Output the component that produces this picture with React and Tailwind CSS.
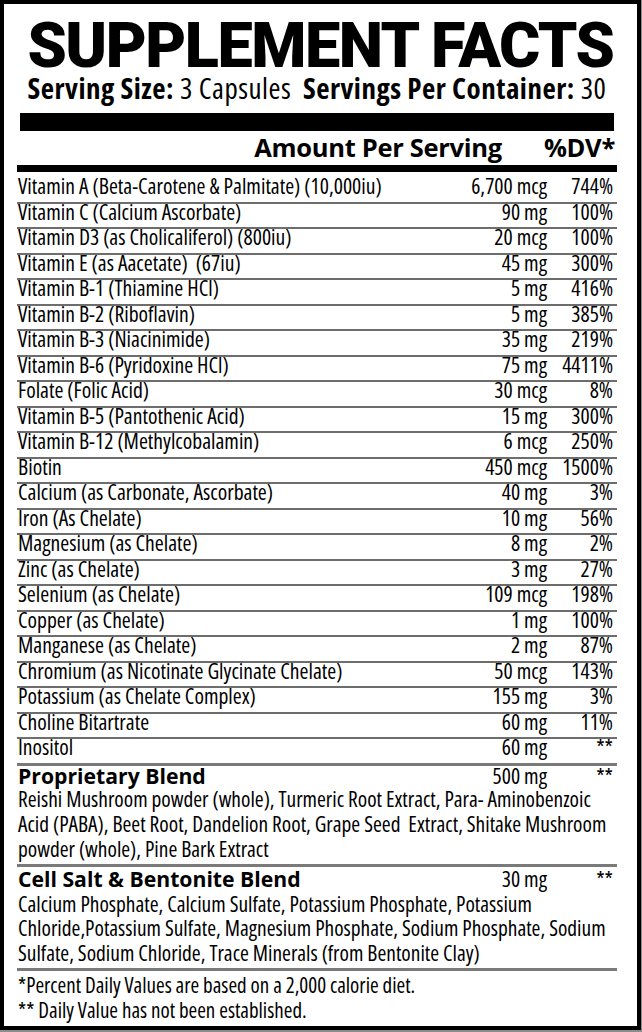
const rows = [
  ["Vitamin A (Beta-Carotene & Palmitate) (10,000iu)", "6,700 mcg", "744%"],
  ["Vitamin C (Calcium Ascorbate)", "90 mg", "100%"],
  ["Vitamin D3 (as Cholicaliferol) (800iu)", "20 mcg", "100%"],
  ["Vitamin E (as Aacetate)  (67iu)", "45 mg", "300%"],
  ["Vitamin B-1 (Thiamine HCl)", "5 mg", "416%"],
  ["Vitamin B-2 (Riboflavin)", "5 mg", "385%"],
  ["Vitamin B-3 (Niacinimide)", "35 mg", "219%"],
  ["Vitamin B-6 (Pyridoxine HCl)", "75 mg", "4411%"],
  ["Folate (Folic Acid)", "30 mcg", "8%"],
  ["Vitamin B-5 (Pantothenic Acid)", "15 mg", "300%"],
  ["Vitamin B-12 (Methylcobalamin)", "6 mcg", "250%"],
  ["Biotin", "450 mcg", "1500%"],
  ["Calcium (as Carbonate, Ascorbate)", "40 mg", "3%"],
  ["Iron (As Chelate)", "10 mg", "56%"],
  ["Magnesium (as Chelate)", "8 mg", "2%"],
  ["Zinc (as Chelate)", "3 mg", "27%"],
  ["Selenium (as Chelate)", "109 mcg", "198%"],
  ["Copper (as Chelate)", "1 mg", "100%"],
  ["Manganese (as Chelate)", "2 mg", "87%"],
  ["Chromium (as Nicotinate Glycinate Chelate)", "50 mcg", "143%"],
  ["Potassium (as Chelate Complex)", "155 mg", "3%"],
  ["Choline Bitartrate", "60 mg", "11%"],
];

const proprietary = [
  "Reishi Mushroom powder (whole), Turmeric Root Extract, Para- Aminobenzoic",
  "Acid (PABA), Beet Root, Dandelion Root, Grape Seed  Extract, Shitake Mushroom",
  "powder (whole), Pine Bark Extract",
];

const cellSalt = [
  "Calcium Phosphate, Calcium Sulfate, Potassium Phosphate, Potassium",
  "Chloride,Potassium Sulfate, Magnesium Phosphate, Sodium Phosphate, Sodium",
  "Sulfate, Sodium Chloride, Trace Minerals (from Bentonite Clay)",
];

// one nutrient line with its gray rule underneath
const Row = ({ name, amount, dv, last }) => (
  <div
    className={`flex items-start whitespace-pre text-[21.6px] leading-[15.2px] pb-[8.3px] ${
      last ? "border-b-[3px] border-[#7a7a7a]" : "border-b-2 border-[#6d6d6d]"
    }`}
  >
    <span className="flex-1 pl-[1px]">{name}</span>
    <span className="text-right">{amount}</span>
    <span className="w-[70px] text-right pr-[4px]">{dv}</span>
  </div>
);

const Blend = ({ title, amount, lines, lineClass, titleClass }) => (
  <div className="pb-[2.5px] border-b-[3px] border-[#7a7a7a]">
    <div className={`flex items-start ${titleClass}`}>
      <span className="flex-1 pl-[1px] font-bold font-stretch-normal text-[21.2px]">{title}</span>
      <span className="text-right text-[21.6px]">{amount}</span>
      <span className="w-[70px] text-right pr-[4px] text-[21.6px]">**</span>
    </div>
    <div className={`text-[21.4px] pl-[1px] ${lineClass}`}>
      {lines.map((l) => (
        <div key={l} className="whitespace-pre">{l}</div>
      ))}
    </div>
  </div>
);

export default function App() {
  return (
    <div className="w-[642px] h-[1032px] bg-[#8c8c8c]">
      <div className="w-[641px] h-[1030px] border-4 border-black bg-white text-black font-['Open_Sans',sans-serif] font-stretch-condensed pl-[13px] pr-[20px]">
        {/* heading */}
        <div className="pt-[10px] pl-[7px] flex justify-center">
          <h1 className="font-['Roboto',sans-serif] font-black font-stretch-normal text-[63px] leading-[63px] tracking-[-1.5px]">
            SUPPLEMENT FACTS
          </h1>
        </div>
        <div className="flex justify-center text-[29px] leading-[22px] tracking-[0.5px] whitespace-pre">
          <span className="font-bold">Serving Size:</span>
          <span> 3 Capsules  </span>
          <span className="font-bold">Servings Per Container:</span>
          <span> 30</span>
        </div>

        <div className="mt-[14.3px] h-[18px] mx-[3px] bg-black" />

        <div className="flex justify-end gap-[42px] pr-[2px] font-bold font-stretch-normal text-[25.5px] leading-[32.2px] tracking-[-0.3px]">
          <span>Amount Per Serving</span>
          <span>%DV*</span>
        </div>

        <div className="mt-[1.8px] h-[7px] bg-black" />

        {/* nutrient table */}
        <div className="pt-[6px]">
          {rows.map(([n, a, d]) => (
            <Row key={n} name={n} amount={a} dv={d} />
          ))}
          <Row name="Inositol" amount="60 mg" dv="**" last />
        </div>

        <Blend
          title="Proprietary Blend"
          amount="500 mg"
          lines={proprietary}
          titleClass="leading-[20.5px]"
          lineClass="leading-[25px]"
        />
        <Blend
          title="Cell Salt & Bentonite Blend"
          amount="30 mg"
          lines={cellSalt}
          titleClass="leading-[24.7px]"
          lineClass="leading-[24.5px]"
        />

        <div className="pt-[2px] text-[21px] leading-[25px] pl-[1px]">
          <div>*Percent Daily Values are based on a 2,000 calorie diet.</div>
          <div>** Daily Value has not been established.</div>
        </div>
      </div>
    </div>
  );
}
